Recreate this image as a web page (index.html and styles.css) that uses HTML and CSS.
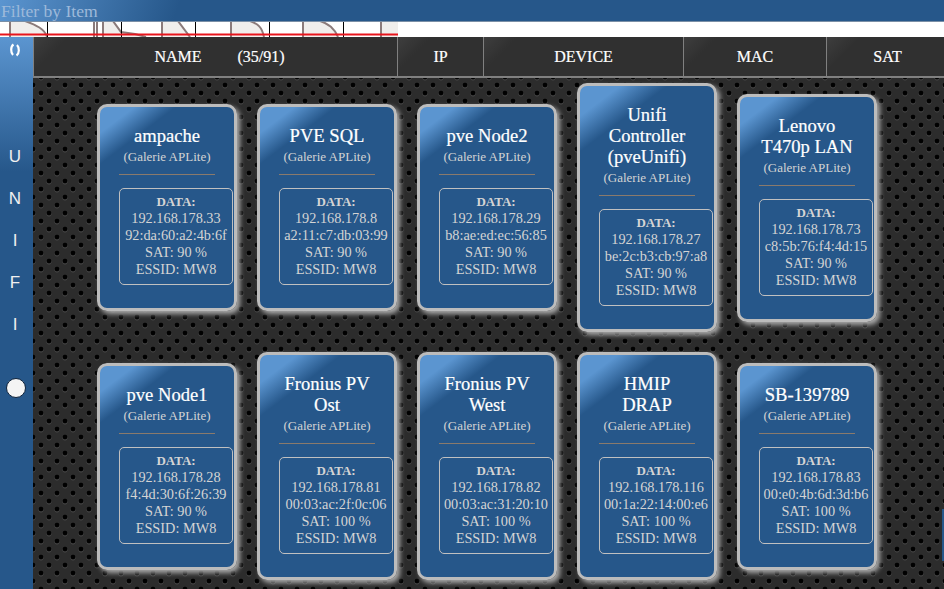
FILE: index.html
```html
<!DOCTYPE html>
<html lang="en">
<head>
<meta charset="utf-8">
<title>Filter by Item</title>
<link rel="stylesheet" href="styles.css">
</head>
<body>
<div class="page">
  <div class="titlebar">Filter by Item</div>
  <div class="strip">
    <svg class="chart" width="398" height="15" viewBox="0 0 398 15">
      <g class="fills">
        <path d="M10 -3V15H47C45 7 36 3 25 -3Z"/>
        <path d="M103 -3V15H145L121 10L113 -3Z"/>
        <path d="M162 -3V15H189L178 -3Z"/>
        <path d="M231 -3V15H264C262 5 256 3 250 -3Z"/>
        <path d="M303 -3V15H337C334 6 328 3 320 -3Z"/>
        <path d="M381 -3V15H398V-3Z"/>
      </g>
      <g class="lines">
        <path d="M10 15V-3M25 -1C36 3 45 7 47 15"/>
        <path d="M94 15V-3M97 15V-3M103 15V-3M113 -1L121 10L135 12L146 15"/>
        <path d="M162 15V-3M178 -1L190 15"/>
        <path d="M231 15V-3M250 -1C258 2 262 5 264 15"/>
        <path d="M303 15V-3M320 -1C329 2 334 6 338 15"/>
        <path d="M381 15V-3"/>
      </g>
      <path class="grid" d="M47.5 0V15M121.5 0V15M195.5 0V15M269.5 0V15M343.5 0V15"/>
      <path class="limit" d="M0 12.5H398"/>
    </svg>
  </div>
  <div class="body">
    <aside class="side">
      <svg class="sync" width="14" height="14" viewBox="0 0 14 14">
        <path d="M5.5 1.5C2.5 3.5 2.5 9.5 5 12M8.5 12.5C11.5 10.5 11.5 4.5 9 2"/>
      </svg>
      <div class="letters">
        <span>U</span><span>N</span><span>I</span><span>F</span><span>I</span>
      </div>
      <div class="radio"></div>
    </aside>
    <main class="main">
      <div class="head">
        <div class="col col-name"><span>NAME</span><span class="count">(35/91)</span></div>
        <div class="col col-ip">IP</div>
        <div class="col col-device">DEVICE</div>
        <div class="col col-mac">MAC</div>
        <div class="col col-sat">SAT</div>
      </div>
      <div class="content">
        <div class="cards">
          <article class="card"><h2>ampache</h2><p class="sub">(Galerie APLite)</p><hr><div class="data"><b>DATA:</b><br>192.168.178.33<br>92:da:60:a2:4b:6f<br>SAT: 90 %<br>ESSID: MW8</div></article>
          <article class="card"><h2>PVE SQL</h2><p class="sub">(Galerie APLite)</p><hr><div class="data"><b>DATA:</b><br>192.168.178.8<br>a2:11:c7:db:03:99<br>SAT: 90 %<br>ESSID: MW8</div></article>
          <article class="card"><h2>pve Node2</h2><p class="sub">(Galerie APLite)</p><hr><div class="data"><b>DATA:</b><br>192.168.178.29<br>b8:ae:ed:ec:56:85<br>SAT: 90 %<br>ESSID: MW8</div></article>
          <article class="card"><h2>Unifi Controller (pveUnifi)</h2><p class="sub">(Galerie APLite)</p><hr><div class="data"><b>DATA:</b><br>192.168.178.27<br>be:2c:b3:cb:97:a8<br>SAT: 90 %<br>ESSID: MW8</div></article>
          <article class="card"><h2>Lenovo T470p LAN</h2><p class="sub">(Galerie APLite)</p><hr><div class="data"><b>DATA:</b><br>192.168.178.73<br>c8:5b:76:f4:4d:15<br>SAT: 90 %<br>ESSID: MW8</div></article>
          <article class="card"><h2>pve Node1</h2><p class="sub">(Galerie APLite)</p><hr><div class="data"><b>DATA:</b><br>192.168.178.28<br>f4:4d:30:6f:26:39<br>SAT: 90 %<br>ESSID: MW8</div></article>
          <article class="card"><h2>Fronius PV Ost</h2><p class="sub">(Galerie APLite)</p><hr><div class="data"><b>DATA:</b><br>192.168.178.81<br>00:03:ac:2f:0c:06<br>SAT: 100 %<br>ESSID: MW8</div></article>
          <article class="card"><h2>Fronius PV West</h2><p class="sub">(Galerie APLite)</p><hr><div class="data"><b>DATA:</b><br>192.168.178.82<br>00:03:ac:31:20:10<br>SAT: 100 %<br>ESSID: MW8</div></article>
          <article class="card"><h2>HMIP DRAP</h2><p class="sub">(Galerie APLite)</p><hr><div class="data"><b>DATA:</b><br>192.168.178.116<br>00:1a:22:14:00:e6<br>SAT: 100 %<br>ESSID: MW8</div></article>
          <article class="card"><h2>SB-139789</h2><p class="sub">(Galerie APLite)</p><hr><div class="data"><b>DATA:</b><br>192.168.178.83<br>00:e0:4b:6d:3d:b6<br>SAT: 100 %<br>ESSID: MW8</div></article>
        </div>
        <div class="peek"></div>
      </div>
    </main>
  </div>
</div>
</body>
</html>
```
FILE: styles.css
```css
html, body {
  margin: 0;
  height: 100%;
  overflow: hidden;
}
body {
  font-family: "Liberation Serif", serif;
  background: #2c2c2c;
}
.page {
  width: 944px;
  height: 589px;
  display: flex;
  flex-direction: column;
  overflow: hidden;
}
.titlebar {
  height: 21px;
  box-sizing: content-box;
  border-bottom: 1px solid #7b8fa6;
  background: linear-gradient(110deg, #5b95d0 0, #26578a 170px);
  color: #9db9da;
  font-size: 17.6px;
  line-height: 22px;
  padding-left: 1px;
  white-space: nowrap;
}
.strip {
  height: 15px;
  background: #fff;
  flex: none;
}
.chart {
  display: block;
}
.fills path {
  fill: #f0eeec;
}
.lines path {
  fill: none;
  stroke: #8b7b7b;
  stroke-width: 2;
}
.grid {
  fill: none;
  stroke: #000;
  stroke-width: 1;
}
.limit {
  stroke: #e8141c;
  stroke-width: 2;
}
.body {
  flex: 1;
  display: flex;
  min-height: 0;
}
.side {
  width: 33px;
  flex: none;
  display: flex;
  flex-direction: column;
  align-items: center;
  padding-right: 3px;
  box-sizing: border-box;
  background: linear-gradient(180deg, #5b95d0 0, #26578a 135px);
  color: #f0f0f0;
  font-family: "Liberation Sans", sans-serif;
}
.sync {
  margin-top: 6px;
  flex: none;
  fill: none;
  stroke: #fff;
  stroke-width: 2.2;
}
.letters {
  margin-top: 91px;
  display: flex;
  flex-direction: column;
  align-items: center;
  gap: 24px;
  font-size: 17px;
  line-height: 18px;
}
.radio {
  margin: 44px 0 0 1px;
  width: 18px;
  height: 18px;
  border-radius: 50%;
  background: #f4f4f4;
  border: 1px solid #10233a;
  flex: none;
}
.main {
  flex: 1;
  min-width: 0;
  display: flex;
  flex-direction: column;
}
.head {
  height: 39px;
  flex: none;
  display: flex;
  border-bottom: 2px solid #808080;
  background: #303030;
  color: #fff;
  font-size: 16px;
  -webkit-text-stroke: 0.2px #fff;
}
.col {
  display: flex;
  align-items: center;
  justify-content: center;
  box-sizing: border-box;
  border-left: 1px solid #808080;
  background: linear-gradient(135deg, #3e3e3e 0, #303030 24px);
}
.col-name {
  width: 364px;
  padding-left: 8px;
}
.count {
  margin-left: 36px;
}
.col-ip {
  width: 86px;
}
.col-device {
  width: 200px;
}
.col-mac {
  width: 143px;
}
.col-sat {
  flex: 1;
  padding-left: 4px;
}
.content {
  flex: 1;
  min-height: 0;
  position: relative;
  overflow: hidden;
  padding: 5px 0 0 64px;
  background-color: #2c2c2c;
  background-image:
    radial-gradient(circle at 8px 8px, #000 2px, transparent 2.7px),
    radial-gradient(circle at 8px 8px, #000 2px, transparent 2.7px),
    radial-gradient(circle at 8px 9px, #404040 2.2px, transparent 3px),
    radial-gradient(circle at 8px 9px, #404040 2.2px, transparent 3px);
  background-size: 16px 16px;
  background-position: 8px -1px, 0 7px, 8px -1px, 0 7px;
}
.cards {
  display: grid;
  grid-template-columns: repeat(5, 140px);
  column-gap: 20px;
  row-gap: 20px;
  align-items: center;
}
.card {
  box-sizing: border-box;
  border: 3px solid #bcbcbc;
  border-radius: 10px;
  padding: 18px 19px 23px;
  background: linear-gradient(143deg, #5b95d0 10%, #26578a 20%);
  background-origin: border-box;
  box-shadow: 3px 3px 5px #aaa;
  color: #d4d4d4;
}
.card h2 {
  margin: 0;
  font-size: 18.6px;
  line-height: 21px;
  font-weight: 400;
  color: #fff;
  text-align: center;
  -webkit-text-stroke: 0.2px #fff;
}
.sub {
  margin: 4px -6px 0;
  font-size: 13px;
  line-height: 14px;
  text-align: center;
}
.card hr {
  margin: 10px 0 0;
  height: 1px;
  border: 0;
  background: #8a7a6c;
}
.data {
  margin-top: 13px;
  box-sizing: border-box;
  width: 114px;
  padding: 4px 0 6px;
  border: 1px solid #c0c0c0;
  border-radius: 5px;
  font-size: 14.3px;
  line-height: 17px;
  text-align: center;
  white-space: nowrap;
}
.data b {
  font-size: 13px;
}
.peek {
  position: absolute;
  left: 909px;
  top: 431px;
  width: 4px;
  height: 52px;
  background: #26578a;
}
```
